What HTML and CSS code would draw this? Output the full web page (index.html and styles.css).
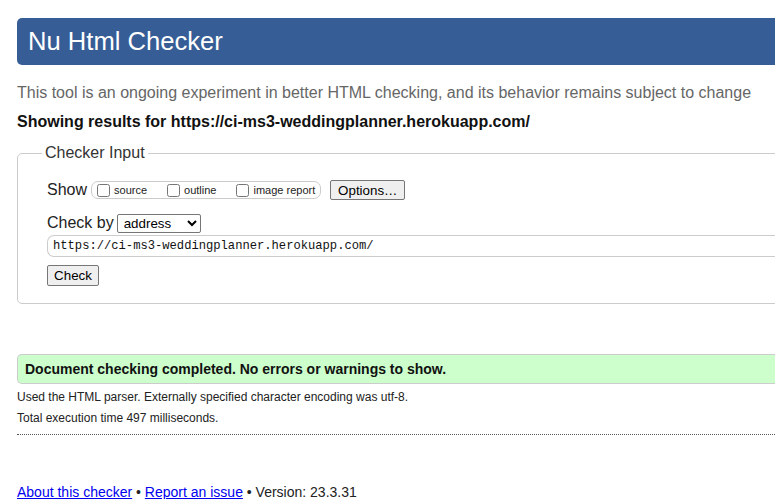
FILE: index.html
```html
<!DOCTYPE html>
<html lang="en">
<head>
<meta charset="utf-8">
<title>Nu Html Checker</title>
<link rel="stylesheet" href="styles.css">
</head>
<body>
<div class="page">
  <h1 class="title">Nu Html Checker</h1>
  <p class="tagline">This tool is an ongoing experiment in better HTML checking, and its behavior remains subject to change</p>
  <p class="showing">Showing results for https://ci-ms3-weddingplanner.herokuapp.com/</p>

  <fieldset class="checker">
    <legend class="legend">Checker Input</legend>
    <div class="row show-row">
      <span class="label">Show</span>
      <div class="opts">
        <label class="opt"><input type="checkbox" class="cb"><span>source</span></label>
        <label class="opt"><input type="checkbox" class="cb"><span>outline</span></label>
        <label class="opt last"><input type="checkbox" class="cb"><span>image report</span></label>
      </div>
      <button class="btn options">Options…</button>
    </div>
    <div class="row by-row">
      <span class="label">Check by</span>
      <select class="sel"><option>address</option></select>
    </div>
    <div class="url">https://ci-ms3-weddingplanner.herokuapp.com/</div>
    <button class="btn check">Check</button>
  </fieldset>

  <div class="success">Document checking completed. No errors or warnings to show.</div>
  <p class="details">Used the HTML parser. Externally specified character encoding was utf-8.</p>
  <p class="details second">Total execution time 497 milliseconds.</p>
  <hr class="dots">

  <p class="footer"><a href="#">About this checker</a> • <a href="#">Report an issue</a> • Version: 23.3.31</p>
</div>
</body>
</html>
```

FILE: styles.css
```css
html, body {
  margin: 0;
  padding: 0;
  overflow: hidden;
  background: #fff;
}

body {
  font-family: "Liberation Sans", Arial, sans-serif;
  color: #222;
}

.page {
  width: 1100px;
  padding: 18px 0 0 17px;
}

.title {
  margin: 0;
  height: 47px;
  display: flex;
  align-items: center;
  padding-left: 11px;
  background: #365d95;
  color: #fff;
  font-weight: normal;
  font-size: 25.6px;
  border-radius: 5px 0 0 5px;
}

.tagline {
  margin: 18px 0 0;
  font-size: 16px;
  line-height: 20px;
  color: #666;
}

.showing {
  margin: 9px 0 0;
  font-size: 16px;
  line-height: 20px;
  font-weight: bold;
  color: #111;
}

.checker {
  margin: 11px 0 0;
  padding: 17px 0 17px 29px;
  border: 1px solid #ccc;
  border-radius: 5px 0 0 5px;
  min-width: 0;
}

.legend {
  margin-left: -5px;
  padding: 0 3px;
  font-size: 16px;
  line-height: 20px;
  color: #333;
}

.row {
  display: flex;
  align-items: center;
}

.show-row {
  height: 20px;
}

.label {
  font-size: 16px;
  line-height: 20px;
  color: #222;
}

.opts {
  display: flex;
  align-items: center;
  height: 16px;
  margin-left: 4px;
  padding: 0 5px 0 5px;
  border: 1px solid #ccc;
  border-radius: 7px;
}

.opt {
  display: flex;
  align-items: center;
  font-size: 11px;
  color: #222;
  margin-right: 20px;
}

.opt.last {
  margin-right: 0;
}

.cb {
  margin: 1px 4px 0 0;
  width: 13px;
  height: 13px;
}

.btn {
  font-family: "Liberation Sans", Arial, sans-serif;
  font-size: 13.33px;
  height: 20px;
  padding: 0 6px;
  background: #efefef;
  border: 1px solid #767676;
  border-radius: 2px;
  color: #000;
}

.options {
  margin-left: 9px;
  width: 75px;
}

.by-row {
  height: 22px;
  margin-top: 12px;
}

.sel {
  margin-left: 3px;
  width: 84px;
  height: 19px;
  font-family: "Liberation Sans", Arial, sans-serif;
  font-size: 13.33px;
  border: 1px solid #767676;
  border-radius: 2px;
  background: #fff;
  color: #000;
  padding: 0 0 0 2px;
}

.url {
  margin-top: 1px;
  height: 20px;
  line-height: 20px;
  border: 1px solid #ccc;
  border-right: none;
  border-radius: 7px 0 0 7px;
  padding-left: 5px;
  font-family: "Liberation Mono", "DejaVu Sans Mono", monospace;
  font-size: 12.15px;
  color: #111;
}

.check {
  display: block;
  margin-top: 8px;
  width: 52px;
  height: 21px;
}

.success {
  margin-top: 50px;
  height: 28px;
  line-height: 28px;
  padding-left: 7px;
  background: #ccffcc;
  border: 1px solid #ccc;
  border-right: none;
  border-radius: 5px 0 0 5px;
  font-size: 14px;
  font-weight: bold;
  color: #111;
}

.details {
  margin: 3px 0 0;
  font-size: 12px;
  line-height: 20px;
  color: #222;
}

.details.second {
  margin-top: 1px;
}

.dots {
  margin: 6px 0 0;
  border: none;
  border-top: 1px dotted #555;
  height: 0;
}

.footer {
  margin: 47px 0 0;
  font-size: 14px;
  line-height: 20px;
  color: #222;
}

.footer a {
  color: #0000ee;
}
```
